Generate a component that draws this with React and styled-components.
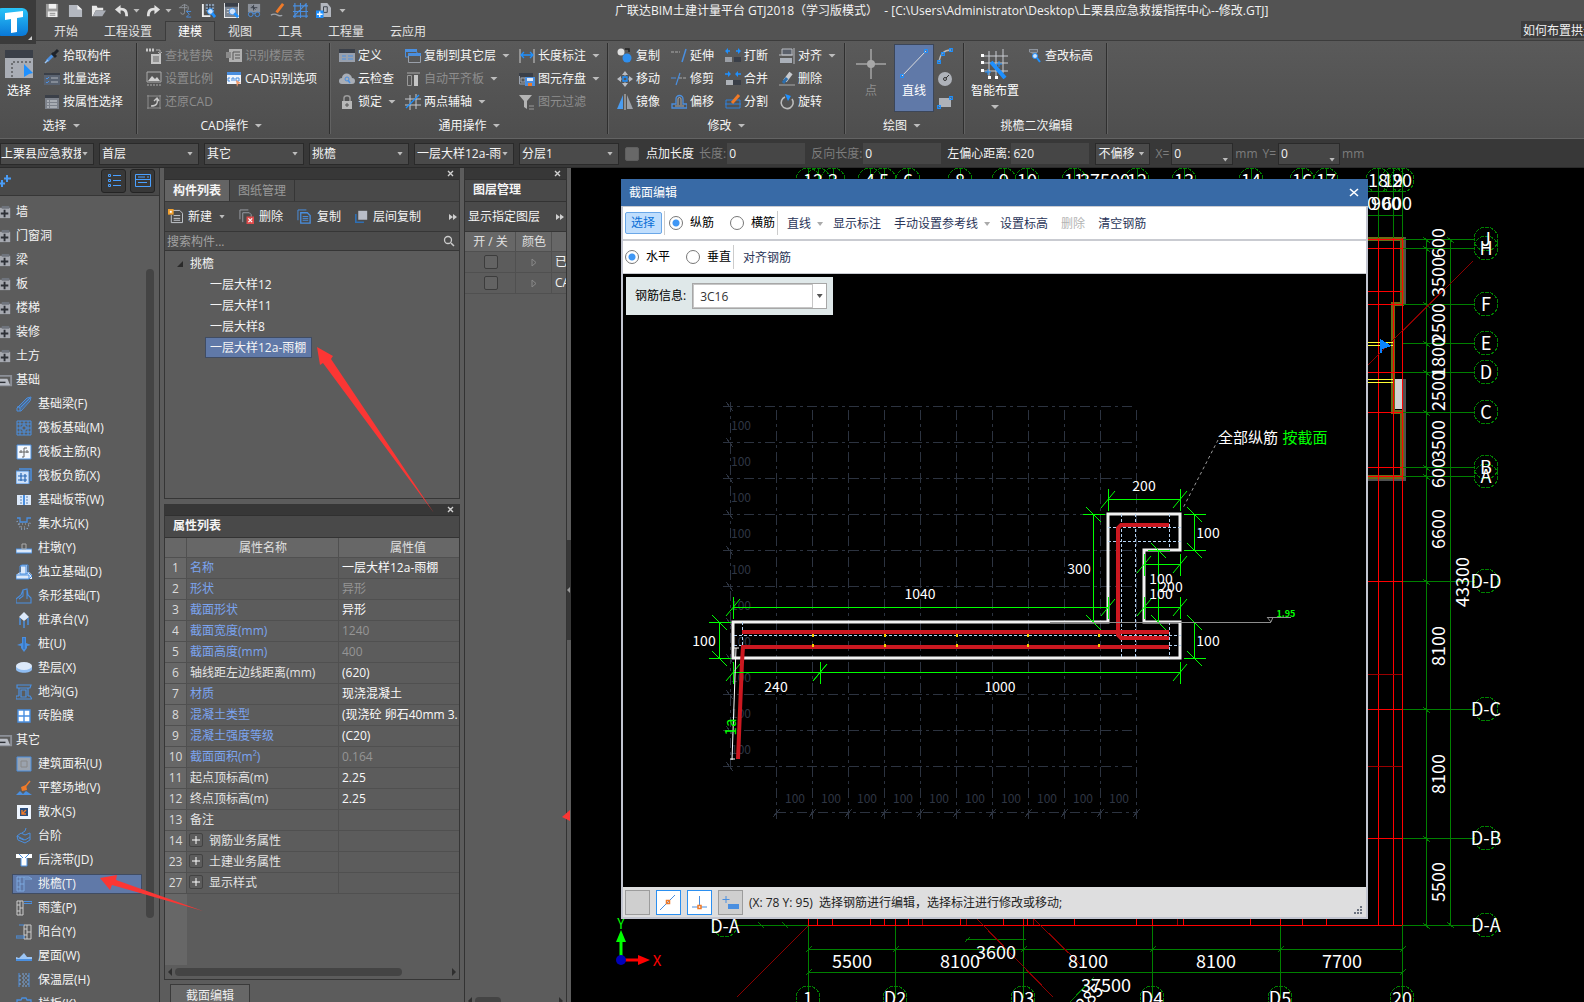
import React from "react";
import styled, { createGlobalStyle, css } from "styled-components";

const Global = createGlobalStyle`
  * { box-sizing: border-box; }
  html, body { margin: 0; background: #000; overflow: hidden; }
  body, button, input, select, table {
    font-family: "Open Sans", "Noto Sans CJK SC", sans-serif;
    font-size: 12px;
    line-height: 16px;
  }
  button, input, select { margin: 0; color: inherit; }
`;

/* ---------- icons ---------- */

const B = "#4a8fe0";
const D = "#3a3f48";
const L = "#dce9fa";
const O = "#f07a28";

const line = (d, stroke = B, w = 1, extra = {}) => (
  <path d={d} fill="none" stroke={stroke} strokeWidth={w} {...extra} />
);
const fill = (d, color = B) => <path d={d} fill={color} />;

const ICONS = {
  save: <>{fill("M1 1h13v14H1z", "#9a9a9a")}{fill("M4 1h8v5H4z", "#f2f2f2")}{fill("M3 9h10v6H3z", "#eee")}{line("M5 11h6M5 13h6", "#888")}</>,
  page: <>{fill("M1 2h9l5 5v8H1z", "#b3b7bf")}{fill("M10 2v5h5z", "#f2f2f2")}</>,
  open: <>{fill("M1 3h5l1 2h6v3H5l-3 6H1z", "#e8e8e8")}{fill("M5 8h11l-4 6H2z", "#a9adb5")}</>,
  undo: fill("M1 7l6-5v3c6 0 8 3 8 9h-3c0-4-1-6-5-6v4z", "#e0e0e0"),
  redo: fill("M15 7L9 2v3c-6 0-8 3-8 9h3c0-4 1-6 5-6v4z", "#e0e0e0"),
  sum: <>{line("M1 5h9M7 1v9a2 2 0 0 1-4 0M3 5c0-4 8-4 8 0s-2 3-2 3", "#8f949c")}{line("M14 9H9l3 3-3 3h5", B)}</>,
  calcview: <>{fill("M1 1h2v14H1zM1 13h9v2H1z", "#eee")}{fill("M5 1h9v8H5z", "#8899ad")}{line("M5 4h9M5 7h9M8 1v8M11 1v8", D)}<circle cx="10" cy="9" r="3" fill="#cfe3fb" stroke="#1e90ff" />{line("M12 11l3 4", "#1e90ff", 3)}</>,
  findview: <>{fill("M0 0h16v16H0z", "#f2f2f2")}{fill("M1 0h14v15H1z", "#7b8490")}{fill("M1 0h14v4H1z", D)}{line("M3 7h4M3 10h2", "#d5d8dc")}<circle cx="9" cy="9" r="3.500" fill="#cfe3fb" stroke={B} />{line("M11 11l4 4", "#1e90ff", 3)}</>,
  glasses: <>{fill("M1 1h13v9H1z", "#8b9099")}{line("M4 5h7M7 2v6M5 3l4 4", D)}<circle cx="4" cy="12" r="2.500" fill="none" stroke={B} /><circle cx="11" cy="12" r="2.500" fill="none" stroke={B} />{line("M6 11h3", B)}</>,
  brush: <>{line("M14 1L7 10", O, 3)}{line("M1 13c6-4 8 3 12 0", "#9ea2a8", 1.5)}</>,
  gridblue: line("M2 0v16M8 0v16M14 0v16M0 3h16M0 9h16M0 14h16M0 15L14 1", B, 1.2),
  addpage: <>{fill("M5 0h7l4 5v10H5z", "#b3b7bf")}{line("M8 4h4v6H8z", D)}{fill("M0 8h8v8H0z", "#1e90ff")}{line("M4 9v6M1 12h6", "#fff", 1.4)}</>,
  dropper: <>{line("M3 13l6-6", B, 3)}{line("M1 15l3-3", "#9cc6f6", 1.5)}{line("M8 5l4 4M10 6l4-4", "#1e2229", 3)}</>,
  batch: <>{fill("M0 2h16v12H0z", "#596270")}{fill("M0 2h16v2H0z", D)}{line("M2 7l1 1 2-2M2 11l1 1 2-2", B)}{line("M7 7h7M7 11h7", "#aeb3bb")}</>,
  props: <>{fill("M1 1h14v14H1z", "#7d828b")}{fill("M1 1h14v3H1z", D)}{line("M3 7h2M6 7h7M3 10h2M6 10h7M3 13h2M6 13h7", "#d5d8dc")}</>,
  replace: <>{line("M0 2h8", "#c8c8c8", 3, { strokeDasharray: "2 1" })}{line("M10 2h4v3M12 4l2 2 2-2", "#b0b0b0")}{fill("M5 6h10v10H5z", "#c4c4c4")}{line("M7 9h6M7 11h6M7 13h6", "#666")}</>,
  floors: <>{fill("M3 1h13v13H3z", "#b0b0b0")}{fill("M0 4h5v6H0z", "#8a8a8a")}{line("M7 4h7M9 7h5M9 10h5M7 4v8", "#555")}</>,
  ratio: <>{line("M1 1h14v10H1z", "#aaa")}{fill("M2 10l4-5 3 3 2-2 3 4z", "#d0d0d0")}{line("M1 14h14", "#aaa", 1, { strokeDasharray: "2 1" })}</>,
  cadopt: <>{fill("M1 1h14v12H1z", "#f0f5fc")}{fill("M1 1h14v3H1z", B)}{line("M4 7H2v3h2M6 10V7h2v3M10 7v3h3V7z", B)}{fill("M10 9l5 3-3 1-1 3z", "#f29a6a")}</>,
  restore: <>{line("M1 2h14M2 1v14M14 1v14M1 14h14", "#8d8d8d")}{line("M5 12c6 0 7-3 6-7M8 7l3-3 2 3", "#c8c8c8", 1.4)}</>,
  define: <>{fill("M0 1h16v13H0z", "#98a0ad")}{fill("M0 1h16v4H0z", D)}{line("M3 8h4M9 8h5M3 11h4M9 11h5", B)}</>,
  cloud: <>{fill("M3 13a3 3 0 0 1 0-6c0-6 9-6 10 0a3 3 0 0 1 0 6z", "#a9aeb6")}<circle cx="8" cy="8" r="2" fill="none" stroke={B} />{line("M9 9l2 3", B, 1.5)}</>,
  lock: <>{line("M5 7V4c0-3 6-3 6 0v3", "#9b9b9b", 1.5)}{fill("M3 7h10v8H3z", "#b8b8b8")}{line("M8 9v4M6 11h4", "#555")}</>,
  copylayer: <>{fill("M0 1h12v3H0z", B)}{line("M.5 1v8H3M12 4v1", B)}{line("M3.500 6.500h12v8h-12z", "#9aa0aa")}{fill("M3 5h13v3H3z", B)}</>,
  align1: <>{line("M2 2h13", "#aaa")}{line("M2.500 4.500h4v10h-4z", "#999")}{fill("M9 4h4v11H9z", "#c5c5c5")}</>,
  axes: <>{line("M0 5h16M0 11h16M5 1v15M11 0v15", "#c5c9cf")}{line("M1 14L14 1", "#1e90ff", 1.2)}</>,
  length: <>{line("M1 1v14M15 1v14", "#ccc")}{line("M2 7h12M5 4L2 7l3 3M11 4l3 3-3 3", "#1e90ff", 1.3)}</>,
  store: <>{fill("M0 2h14v4H0z", D)}{line("M.5 5v8H7M2 7h4v4H2z", "#9aa3b0")}{fill("M6 6h10v9H6z", B)}{fill("M8 7h6v3H8z", "#dfe9f8")}{fill("M9 12h4v3H9z", O)}</>,
  filter: <>{fill("M0 1h13L8 7v8l-3-2V7z", "#b4b4b4")}{line("M10 12h5M10 15h5", "#999")}</>,
  copyball: <><circle cx="4" cy="4" r="3.500" fill="#e0e0e0" /><circle cx="10" cy="10" r="4.500" fill="#2f8fee" />{line("M8 1h4v3", "#222", 1.5)}</>,
  move: <>{line("M8 1v14M1 8h14", "#aaa", 1, { strokeDasharray: "4 6" })}{fill("M8 0l3 4H5zM8 16l3-4H5zM0 8l4-3v6zM16 8l-4-3v6z", "#b9bcc2")}{line("M6 6h4v4H6z", "#1e90ff", 1.3)}</>,
  mirror: <>{fill("M6 1v14H0z", "#4a9cf0")}{fill("M10 1v14h6z", "#9ca1a9")}{line("M8 0v16", "#ccc")}</>,
  extend: <>{line("M0 4h9", "#aaa", 1, { strokeDasharray: "3 1" })}{line("M15 1l-4 13", B, 1.5)}</>,
  trim: <>{line("M0 7h5", B)}{line("M9 2L5 14", B, 1.2)}{line("M8 7h8", "#aaa", 1, { strokeDasharray: "3 1" })}</>,
  offset: <>{line("M1 14v-4h4V5a3 3 0 0 1 7 0v5h4v4z", B, 1.3)}{line("M4 12h9M7 11V5a1 1 0 0 1 3 0v6", "#aaa")}</>,
  break: <>{fill("M0 9h7v5H0z", "#9b9fa6")}{fill("M9 9h7v5H9z", D)}{line("M1 3h4M11 3h4", "#1e90ff", 1.3)}{fill("M3 0l-3 3 3 3zM13 0l3 3-3 3z", "#1e90ff")}</>,
  merge: <>{fill("M1 9h7v5H1z", "#aeb2b8")}{fill("M8 9h8v5H8z", D)}{line("M0 3h4M12 3h4", "#1e90ff", 1.3)}{fill("M3 0l3 3-3 3zM13 0l-3 3 3 3z", "#1e90ff")}</>,
  split: <>{line("M1 6h14v8H1zM0 10h16", "#2f80da")}{line("M14 1L7 9", O, 3)}</>,
  alignr: <>{fill("M3 1h10v6H3z", "#5a606b")}{fill("M1 10h12v5H1z", "#aab0b9")}{line("M3 1h10v6H3zM15 0v16M0 7h14", "#b9bcc2")}</>,
  erase: <>{line("M6 10l6-8", "#c8cbd0", 4)}{line("M4 12l4-5", "#2c6fae", 3)}{line("M0 14h16", "#aaa")}</>,
  rotate: <>{line("M6 3a6 6 0 1 0 7 2", "#bbb", 1.6)}{fill("M6 0l6 2-3 5z", "#1e90ff")}</>,
  arc: <>{line("M2 14C3 6 7 2 14 2", "#bbb", 1.3)}{line("M.700 12.700h2.600v2.600H.700zM4.700 4.700h2.600v2.600H4.700zM12.700.700h2.600v2.600h-2.600z", "#1e90ff", 1.2)}</>,
  circ: <><circle cx="8" cy="8" r="7" fill="#aeb2b9" /><circle cx="8" cy="8" r="1.500" fill="none" stroke="#333" />{line("M9 7l3-3", "#333")}</>,
  rect: <>{fill("M2 4h12v9H2z", "#aeb2b9")}{line("M.700 11.700h2.600v2.600H.700zM12.700 2.700h2.600v2.600h-2.600z", "#1e90ff", 1.2)}</>,
  elev: <>{fill("M3 1h9v3l-2 2v4L7 9V6L3 4z", "#8e949d")}{line("M4 3h7", "#444")}<circle cx="9" cy="8" r="2.500" fill="#cfe3fb" stroke="#1e90ff" />{line("M11 10l3 4", "#1e90ff", 2)}</>,
  newdoc: <>{line("M4.500 1.500h8l3 3v10h-12v-8", "#c8ccd2")}{line("M6 7h7M6 10h7M6 12h7", "#c8ccd2")}{fill("M0 0h6v6H0z", "#f0a030")}{fill("M2 2h2v2H2z", "#fff")}</>,
  deldoc: <>{line("M1 11V1h9M4 14V4h7l2 2v3", "#9b9fa6")}{fill("M8 8h8v8H8z", "#dd4b4b")}{line("M10 10l4 4M14 10l-4 4", "#fff", 1.3)}</>,
  copydoc: <>{line("M1 12V1h9", B)}{line("M4 4h7l3 3v8H4z", B, 1.4)}{line("M6 8h6M6 10h6M6 12h6", B)}</>,
  layers: <>{line("M1 5v10h10", "#2e6fb4", 2)}{fill("M4 1h11v11H4z", "#b9bdc8")}</>,
  closed: <>{fill("M0 3h13v11H0z", "#a6a9b0")}{fill("M4 1h8v3H4z", "#6f747d")}{line("M3 9h8M7 5v8", "#2d3036", 2)}</>,
  opened: <>{line("M0 3h14v10H0z", "#8c9098", 2)}{fill("M0 6h10l3 7H0z", "#b8bcc4")}{line("M2 10h6", "#2d3036", 1.5)}</>,
  beam: <>{fill("M2 12L12 2h2l-1 3L5 14z", "#4b6f9c")}{line("M1 12L11 2l4-1-1 4L5 15H1zM4 15v-4H1M5 11l9-9", B)}</>,
  raft: line("M1 1h14v14H1zM4 1v14M12 1v14M1 4h14M1 12h14M6 6h4v4H6zM8 1v5M8 10v5M1 8h5M10 8h5", B, 1),
  raftmain: <>{fill("M1 1h14v14H1z", "#f5f9ff")}{line("M1 1h14v14H1z", B)}{line("M3 8h10M8 4v9M5 6v3M11 6v3M6 13h2M8 4h3", "#666")}</>,
  raftneg: <>{line("M3 1h12v12", B, 1.5)}{fill("M0 3h13v13H0z", "#cfe2fa")}{line("M0 3h13v13H0z", B)}{line("M2 8h9M2 12h9M5 5v8M9 6v8", "#2767b4", 1.2)}</>,
  strip: <>{fill("M1 3h14v10H1z", L)}{line("M5 4v9M11 4v9", "#5a80b0", 1, { strokeDasharray: "2 1" })}{line("M8 3v10", B, 2)}</>,
  sump: <>{line("M1 2h3v4h7V2h4", B, 1.3)}{line("M1 5l4 8h6l4-8", "#8ba7cc", 1.4, { strokeDasharray: "1 2" })}{line("M3 8h10M5 11h6", "#aaa", 1, { strokeDasharray: "1 2" })}</>,
  pier: <>{fill("M0 9h16v4H0z", L)}{line("M0 9h16v4H0z", B)}{line("M6 4h4v5H6z", "#aaa")}</>,
  pad: <>{fill("M0 11l4-3h9l3 3v4H0z", L)}{fill("M5 1h6v9H5z", L)}{line("M0 11h13v4H0zM4 2h6v8H4zM4 2l2-1h6v8l-2 1M13 15l3-3-3-3", B)}</>,
  stripf: line("M0 15v-4l5-4 2-5 4-1 1 6 3 3v5zM7 2v6l-4 3M11 1v10", B, 1.1),
  pilecap: <>{fill("M8 0l5 5-5 4-5-4z", L)}{line("M4 6v7M8 9v7M12 6v7", B, 1.5)}</>,
  pile: <>{fill("M6 1h4v6l5 2-4 1v2l-3 4-3-4v-2L1 9l5-2z", B)}{line("M8 2v11", "#2767b4")}</>,
  cushion: <>{fill("M0 6v3c0 5 16 5 16 0V6z", "#8fbdf2")}<ellipse cx="8" cy="6" rx="8" ry="4" fill={L} /></>,
  trench: line("M1 1h14l-1 3H1zM3 4v8M12 4v8M3 12H0v3h16l-2-3h-2M5 6h5v7H5z", B, 1.2),
  brick: <>{fill("M2 2h12v12H2z", "#fff")}{line("M2 8h12M8 2v12M2 2h12v12H2z", B, 1.4)}</>,
  area: <>{fill("M1 1h14v14H1z", "#9ba3ae")}{line("M1 1h14v14H1z", B)}{line("M5 5h6v6H5z", "#888")}</>,
  ground: <>{line("M14 1L9 7", O, 1.5)}{fill("M5 7l5-2 1 5-5 1z", O)}{fill("M0 15l4-4 3 3 3-3 6 4z", B)}</>,
  apron: <>{fill("M1 1h14v14H1z", "#eef5ff")}{fill("M4 4h8v8H4z", "#2c4e7d")}{line("M10 6l-4 4M6 6v4h4", O, 1.4)}</>,
  steps: line("M1 8l4-3 4 2 5-2v7l-5 3-7-3zM1 8l8 4 5-3M3 10l5 2M6 5l3-2 1-3", B),
  postcast: <>{fill("M0 2h16v4h-5v8H5V6H0z", "#fff")}{line("M5 6v8h6V6M3 2l4 4M9 6l4-4", B)}</>,
  eave: line("M1 1h7v14H1zM4 1v14M1 5h3M4 8h4M1 11h3M8 1h5l3 2H9", "#7ca9df"),
  canopy: <>{line("M1 1h6v14H1zM4 1v14M1 5h3M4 8h3M1 11h3", "#ccc")}{line("M8 1.500h8v2H8", B)}</>,
  balcony: <>{line("M8 1h7v14H8zM11 1v14M8 5h3M11 8h4M8 11h3", "#ccc")}{line("M3 1h5M0 12h8v2H0z", B)}</>,
  roof: <>{fill("M0 12v-3l3 1 5-5 3 4 5 0v3z", "#9cc5f5")}{fill("M0 11h16v2H0z", B)}</>,
  insul: <>{line("M3 1v14M13 1v14", B)}{line("M7 1v14M10 1v14M3 4h10M3 8h10M3 12h10", "#7ca9df", 1, { strokeDasharray: "2 2" })}</>,
  rail: line("M1 4h4l1-2h4l1 2h4v8H1zM1 8h14", B, 1.3),
};

const Svg = styled.svg`
  display: block;
  flex: none;
`;
const Icon = ({ name, size = 16 }) => (
  <Svg width={size} height={size} viewBox="0 0 16 16" aria-hidden="true">
    {ICONS[name]}
  </Svg>
);

/* ---------- shared parts ---------- */

const Caret = styled.i`
  flex: none;
  width: 8px;
  height: 4px;
  margin-left: 6px;
  background: ${(p) => p.$color || "#bdbdbd"};
  clip-path: polygon(0 0, 100% 0, 50% 100%);
`;

const PlainButton = styled.button`
  display: flex;
  align-items: center;
  padding: 0;
  border: 0;
  background: none;
  white-space: nowrap;
  text-align: left;
`;

/* ---------- frame ---------- */

const Shell = styled.div`
  position: relative;
  display: flex;
  flex-direction: column;
  height: 100vh;
  overflow: hidden;
  color: #f4f4f4;
  background: #5c5c5c;
`;

const Top = styled.header`
  display: flex;
  flex: none;
  height: 41px;
  background: #535353;
  border-bottom: 1px solid #3c3c3c;
`;

const LogoBox = styled.div`
  flex: none;
  width: 36px;
  height: 44px;
  z-index: 1;
  background: #3b3b3b;
`;

const TopMain = styled.div`
  display: flex;
  flex: 1;
  flex-direction: column;
  min-width: 0;
`;

const TitleRow = styled.div`
  display: flex;
  align-items: center;
  height: 22px;
`;

const Quick = styled.div`
  display: flex;
  align-items: center;
  gap: 8px;
  width: 579px;
  padding-left: 9px;
`;

const QuickCaret = styled(Caret)`
  width: 7px;
  margin-left: ${(p) => (p.$end ? 0 : "-4px")};
  margin-right: -2px;
`;

const Title = styled.h1`
  margin: 0;
  font-size: 12px;
  font-weight: 400;
  white-space: pre;
`;

const MenuRow = styled.nav`
  display: flex;
  align-items: stretch;
  height: 19px;
  padding-left: 5px;
`;

const MenuTab = styled(PlainButton)`
  padding: 1px 12px 0;
  border: 1px solid transparent;
  border-bottom: 0;
  color: #e2e2e2;
  ${(p) =>
    p.$active &&
    css`
      height: 20px;
      color: #fff;
      background: #5a5a5a;
      border-color: #3c3c3c;
    `}
`;

const HelpBox = styled.input`
  width: 63px;
  height: 17px;
  margin-left: auto;
  padding: 0 0 0 2px;
  border: 0;
  background: #3d3d3d;
  color: #f0f0f0;
`;

/* ---------- ribbon ---------- */

const Ribbon = styled.section`
  display: flex;
  flex: none;
  height: 98px;
  background: linear-gradient(#5a5a5a, #4e4e4e);
  border-bottom: 1px solid #636363;
`;

const Group = styled.div`
  display: flex;
  flex: none;
  flex-direction: column;
  margin: 2px 0 4px;
  padding: 1px ${(p) => p.$right}px 0 ${(p) => p.$left}px;
  border-right: 1px solid #2f2f2f;
  box-shadow: 1px 0 0 #626262;
`;

const GroupBody = styled.div`
  display: flex;
  gap: ${(p) => p.$gap}px;
  height: 69px;
`;

const Caption = styled.div`
  display: flex;
  flex: 1;
  align-items: center;
  justify-content: center;
  padding-top: 4px;
  padding-left: ${(p) => p.$shift || 0}px;
`;

const Column = styled.div`
  display: flex;
  flex-direction: column;
`;

const Tool = styled(PlainButton)`
  gap: 3px;
  height: 23px;
  color: ${(p) => (p.disabled ? "#8e8e8e" : "#f6f6f6")};
  ${Caret} {
    margin-left: 3px;
  }
`;

const BigTool = styled(PlainButton)`
  flex-direction: column;
  gap: 4px;
  width: ${(p) => p.$w}px;
  height: 68px;
  padding-top: 4px;
  color: ${(p) => (p.disabled ? "#8e8e8e" : "#fff")};
  border: 1px solid ${(p) => (p.$on ? "#3c4658" : "transparent")};
  background: ${(p) => (p.$on ? "#6079a8" : "none")};
  ${Caret} {
    margin: 2px 0 0;
  }
`;

const T = ({ icon, children, caret, off }) => (
  <Tool disabled={off}>
    <Icon name={icon} />
    {children}
    {caret && <Caret />}
  </Tool>
);

/* ---------- option bar ---------- */

const Options = styled.section`
  display: flex;
  flex: none;
  align-items: center;
  height: 29px;
  padding-top: 1px;
  background: #383838;
  border-bottom: 1px solid #2a2a2a;
  white-space: nowrap;
`;

const Pick = styled.span`
  display: flex;
  flex: none;
  align-items: center;
  width: ${(p) => p.$w}px;
  height: 22px;
  margin-right: 5px;
  padding-right: 5px;
  border: 1px solid #2a2a2a;
  background: #4a4a4a;
  select {
    flex: 1;
    min-width: 0;
    height: 20px;
    padding: 0 0 0 ${(p) => (p.$flush ? 0 : 2)}px;
    border: 0;
    appearance: none;
    background: none;
    outline: 0;
  }
  ${Caret} {
    width: 6px;
    margin-left: 1px;
  }
`;

const Picker = ({ label, value, w, flush }) => (
  <Pick $w={w} $flush={flush}>
    <select aria-label={label} defaultValue={value}>
      <option>{value}</option>
    </select>
    <Caret />
  </Pick>
);

const Field = styled.label`
  display: flex;
  flex: none;
  align-items: center;
  gap: 1px;
  margin-right: 6px;
  color: ${(p) => (p.$on ? "#f4f4f4" : "#7d7d7d")};
  input {
    width: ${(p) => p.$w}px;
    height: 21px;
    padding: 0 2px;
    border: 0;
    background: #464646;
    color: #f4f4f4;
  }
`;

const Check = styled.input`
  appearance: none;
  flex: none;
  width: 14px;
  height: 14px;
  margin: 0;
  border: 1px solid ${(p) => p.$line || "#5f5f5f"};
  border-radius: 2px;
  background: ${(p) => p.$bg || "#686868"};
`;

const CheckLabel = styled.label`
  display: flex;
  align-items: center;
  gap: 7px;
  margin: 0 5px 0 1px;
`;

const PairBox = styled.label`
  display: flex;
  flex: none;
  align-items: center;
  margin-right: 5px;
  color: #7d7d7d;
`;

const PairInput = styled.span`
  display: flex;
  align-items: flex-end;
  width: 62px;
  height: 22px;
  margin: 0 2px;
  padding: 0 4px 2px 0;
  border: 1px solid #2a2a2a;
  background: #464646;
  input {
    width: 45px;
    height: 17px;
    padding: 0 2px;
    border: 0;
    background: none;
    color: #f4f4f4;
  }
  ${Caret} {
    width: 6px;
    margin-left: auto;
  }
`;

const Pair = ({ label }) => (
  <PairBox>
    {label}
    <PairInput><input defaultValue="0" /><Caret /></PairInput>
    mm
  </PairBox>
);

/* ---------- workspace ---------- */

const Workspace = styled.main`
  display: flex;
  flex: 1;
  min-height: 0;
`;

const Side = styled.aside`
  display: flex;
  flex: none;
  flex-direction: column;
  width: 160px;
  border-right: 1px solid #333;
  overflow: hidden;
`;

const SideBar = styled.div`
  display: flex;
  flex: none;
  align-items: center;
  gap: 4px;
  height: 28px;
  padding: 0 4px 2px 0;
  background: #494949;
  border-bottom: 1px solid #363636;
  > :first-child {
    margin-right: auto;
  }
`;

const SideToggle = styled(PlainButton)`
  justify-content: center;
  width: 25px;
  height: 24px;
  border: 1px solid #242424;
  border-radius: 3px;
  background: #383838;
`;

const SideBody = styled.div`
  display: flex;
  flex: 1;
  min-height: 0;
`;

const SideList = styled.ul`
  flex: 1;
  margin: 0;
  padding: 4px 0 0;
  list-style: none;
  li {
    display: flex;
    flex-direction: column;
  }
`;

const SideGroup = styled(PlainButton)`
  gap: 3px;
  height: 24px;
  svg { margin-left: -2px; }
`;

const SideItem = styled(PlainButton)`
  gap: 6px;
  width: 130px;
  height: 20px;
  margin: 2px 0 2px 12px;
  padding-left: 3px;
  border: 1px solid ${(p) => (p.$on ? "#404c62" : "transparent")};
  background: ${(p) => (p.$on ? "#6079a8" : "none")};
`;

const SideTrack = styled.div`
  flex: none;
  width: 13px;
  padding-top: 73px;
  &::before {
    content: "";
    display: block;
    width: 8px;
    height: 649px;
    border-radius: 4px;
    background: #444;
  }
`;

const Dock = styled.div`
  display: flex;
  flex: none;
  flex-direction: column;
  gap: 5px;
  width: 305px;
  padding: 0 4px;
  border-right: 1px solid #333;
  overflow: hidden;
`;

const Panel = styled.section`
  display: flex;
  flex: ${(p) => p.$flex || "none"};
  flex-direction: column;
  min-height: 0;
  height: ${(p) => (p.$h ? p.$h + "px" : "auto")};
  border: 1px solid #363636;
  border-top: 0;
`;

const Strip = styled.div`
  display: flex;
  flex: none;
  align-items: center;
  justify-content: flex-end;
  height: 12px;
  padding-right: 5px;
  background: #373737;
  border-bottom: 1px solid #303030;
`;

const PanelTabs = styled.div`
  display: flex;
  flex: none;
  height: 22px;
  background: #494949;
  border-bottom: 1px solid #3a3a3a;
`;

const PanelTab = styled(PlainButton)`
  padding: 0 8px;
  color: ${(p) => (p.$on ? "#f6f6f6" : "#999")};
  font-weight: ${(p) => (p.$on ? 600 : 400)};
  background: ${(p) => (p.$on ? "#646464" : "none")};
  border-right: 1px solid #363636;
`;

const PanelTitle = styled.h2`
  flex: none;
  height: 22px;
  margin: 0;
  padding: 2px 8px;
  font-size: 12px;
  line-height: 16px;
  font-weight: 600;
  background: #494949;
  border-bottom: 1px solid #333;
  white-space: nowrap;
`;

const PanelTools = styled.div`
  display: flex;
  flex: none;
  align-items: center;
  gap: 14px;
  height: 30px;
  padding: 0 2px 0 3px;
  background: #4a4a4a;
  border-bottom: 1px solid #363636;
  > :last-child { margin-left: auto; }
`;

const PanelTool = styled(PlainButton)`
  gap: 5px;
  ${Caret} {
    width: 6px;
    margin-left: 2px;
  }
`;

const SearchRow = styled.label`
  display: flex;
  flex: none;
  align-items: center;
  height: 19px;
  padding: 0 4px 0 2px;
  background: #4c4c4c;
  border-bottom: 1px solid #363636;
  input {
    flex: 1;
    min-width: 0;
    height: 18px;
    padding: 0;
    border: 0;
    background: none;
    &::placeholder { color: #a2a2a2; }
  }
`;

const Tree = styled.ul`
  margin: 0;
  padding: ${(p) => (p.$root ? "2px 0 0 6px" : "0 0 0 34px")};
  list-style: none;
`;

const TreeItem = styled(PlainButton)`
  gap: 4px;
  height: 21px;
  padding: 0 5px 0 4px;
  border: 1px solid ${(p) => (p.$on ? "#404c62" : "transparent")};
  background: ${(p) => (p.$on ? "#6079a8" : "none")};
`;

const Grid = styled.table`
  width: 100%;
  table-layout: fixed;
  border-collapse: separate;
  border-spacing: 0;
  th, td {
    height: 21px;
    padding: 0 2px 0 3px;
    border-right: 1px solid #505050;
    border-bottom: 1px solid #505050;
    font-weight: 400;
    text-align: left;
    white-space: nowrap;
    overflow: hidden;
  }
  thead th {
    height: 20px;
    background: #676767;
    color: #e0e0e0;
    text-align: center;
  }
  tr > :last-child { border-right: 0; }
`;

const NumCell = styled.th`
  &&& {
    background: #676767;
    color: #dcdcdc;
    text-align: center;
    padding: 0;
  }
`;

const ValueHead = styled.th`
  &&& { padding-left: 20px; }
`;

const NameCell = styled.td`
  color: ${(p) => (p.$blue ? "#7ba4f0" : "#e4e4e4")};
`;

const ValueCell = styled.td`
  color: ${(p) => (p.$dim ? "#959595" : "#fafafa")};
`;

const LayerCell = styled.td`
  > * { display: block; margin: 0 auto; }
`;

const Expand = styled.button`
  width: 14px;
  height: 14px;
  margin: 0 6px 2px -1px;
  padding: 0;
  border: 1px solid #434343;
  border-radius: 2px;
  background: none;
  vertical-align: middle;
  svg { margin: 0 auto; }
`;

const TableFill = styled.div`
  flex: 1;
  min-height: 0;
  background: linear-gradient(90deg, #676767 22px, transparent 22px);
`;

const ScrollRow = styled.div`
  display: flex;
  flex: none;
  align-items: center;
  height: 14px;
  margin-bottom: ${(p) => (p.$low ? "-6px" : 0)};
  padding: 0 3px;
  gap: 3px;
  &::before, &::after {
    content: "";
    width: 4px;
    height: 8px;
    background: #2f2f2f;
    clip-path: polygon(100% 0, 100% 100%, 0 50%);
  }
  &::after {
    margin-left: auto;
    clip-path: polygon(0 0, 0 100%, 100% 50%);
  }
  span {
    width: ${(p) => p.$thumb}px;
    height: 8px;
    border-radius: 4px;
    background: #444;
  }
`;

const BottomTab = styled.button`
  flex: none;
  width: 80px;
  height: 24px;
  margin: -1px 0 -6px 6px;
  padding: 0;
  border: 1px solid #3a3a3a;
  background: #676767;
  color: #eee;
`;

const LayerDock = styled.div`
  display: flex;
  flex: none;
  width: 106px;
  overflow: hidden;
`;

const LayerPanel = styled.section`
  display: flex;
  flex-direction: column;
  width: 102px;
  border-right: 1px solid #333;
  overflow: hidden;
`;

const LayerFill = styled.div`
  flex: 1;
`;

const Splitter = styled.div`
  display: flex;
  flex: 1;
  flex-direction: column;
  &::before { content: ""; height: 372px; }
`;

const SplitHandle = styled.button`
  display: flex;
  align-items: center;
  height: 100px;
  padding: 0;
  border: 0;
  background: #373737;
  &::before {
    content: "";
    width: 3px;
    height: 6px;
    background: #999;
    clip-path: polygon(100% 0, 100% 100%, 0 50%);
  }
`;

/* ---------- drawing area ---------- */

const Stage = styled.section`
  position: relative;
  flex: 1;
  min-width: 0;
  overflow: hidden;
  background: #000;
`;

const Drawing = styled.svg`
  display: block;
  width: 100%;
  height: 100%;
  font-family: "Noto Sans CJK SC", sans-serif;
`;

const Mark = styled.text.attrs({ dy: -1 })`
  fill: ${(p) => p.$c || "#fff"};
  text-anchor: middle;
  dominant-baseline: central;
`;

const Dialog = styled.section`
  position: absolute;
  left: 50px;
  top: 11px;
  display: flex;
  flex-direction: column;
  width: 747px;
  height: 740px;
  border: 2px solid #c2c5d0;
  border-top: 0;
  color: #10182c;
  background: #000;
`;

const DialogHead = styled.header`
  display: flex;
  flex: none;
  align-items: center;
  justify-content: space-between;
  height: 27px;
  margin: 0 -2px;
  padding: 0 9px 0 8px;
  color: #fff;
  background: #386aa6;
`;

const DialogTitle = styled.h2`
  margin: 0;
  font-size: 12px;
  font-weight: 400;
`;

const DialogBar = styled.div`
  display: flex;
  flex: none;
  align-items: center;
  height: 34px;
  padding: 0 2px;
  background: #fff;
  border-top: 1px solid #c9cbd1;
  border-bottom: 1px solid #c9cbd1;
`;

const DialogTool = styled(PlainButton)`
  margin-right: 13px;
  padding-top: 2px;
  color: ${(p) => (p.disabled ? "#b4b4b4" : "#2a3558")};
  ${Caret} {
    width: 6px;
    margin-right: -3px;
  }
`;

const DialogOn = styled(PlainButton)`
  height: 22px;
  padding: 0 6px 0 5px;
  border: 1px solid #6aa7e8;
  border-radius: 2px;
  background: #c0defd;
  color: #0a6fd6;
`;

const Sep = styled.i`
  flex: none;
  width: 1px;
  height: 24px;
  margin: 0 ${(p) => p.$right}px 0 2px;
  background: #ccc;
`;

const RadioLabel = styled.label`
  display: flex;
  align-items: center;
  gap: 7px;
  margin-right: ${(p) => (p.$last ? 0 : 16)}px;
  color: #000;
  input {
    appearance: none;
    width: 14px;
    height: 14px;
    border: 1px solid #777;
    border-radius: 50%;
    background: #fff;
  }
  input:checked {
    background: radial-gradient(circle, #3f97f5 3px, #fff 4px);
  }
`;

const DialogCanvas = styled.div`
  position: relative;
  flex: 1;
  min-height: 0;
  overflow: hidden;
`;

const InfoBox = styled.div`
  position: absolute;
  left: 3px;
  top: 3px;
  display: flex;
  align-items: center;
  gap: 6px;
  height: 38px;
  padding: 0 6px 0 9px;
  background: #dfe8e9;
  color: #000;
`;

const Combo = styled.span`
  display: flex;
  width: 135px;
  height: 26px;
  border: 1px solid #a7a7a7;
  background: #fff;
  input {
    flex: 1;
    min-width: 0;
    padding: 2px 6px 0;
    border: 1px solid #c6c6c6;
    background: #fff;
    color: #333;
    outline: 0;
  }
  button {
    display: flex;
    align-items: center;
    justify-content: center;
    width: 13px;
    padding: 0;
    border: 0;
    background: #fff;
  }
  ${Caret} {
    width: 6px;
    margin: 0;
  }
`;

const Status = styled.footer`
  display: flex;
  flex: none;
  align-items: center;
  gap: 6px;
  height: 30px;
  padding: 0 4px 0 2px;
  background: #dededf;
  color: #222;
  svg:last-child { align-self: flex-end; }
`;

const StatusText = styled.span`
  flex: 1;
  padding-top: 2px;
  white-space: pre;
`;

const Grip = styled(Svg)`
  margin-bottom: 3px;
`;

const Snap = styled.button`
  width: 25px;
  height: 25px;
  padding: 0;
  border: 1px solid ${(p) => (p.$on ? "#2b8ff0" : "#9c9c9c")};
  background: ${(p) => (p.$on ? "#fff" : "#cfcfcf")};
`;

const Overlay = styled.svg`
  position: absolute;
  inset: 0;
  width: 100%;
  height: 100%;
  pointer-events: none;
`;

/* ---------- plan drawing data ---------- */

const TOP_AXES = [
  [808, "1"], [818, "2"], [833, "3"], [870, "4"], [884, "5"], [908, "6"], [960, "8"],
  [1004, "9"], [1027, "10"], [1074, "11"], [1137, "12"], [1184, "13"], [1251, "14"],
  [1302, "16"], [1326, "17"], [1378, "18"], [1393, "19"], [1402, "20"],
];
const RIGHT_AXES = [
  [239, "J"], [248, "H"], [304, "F"], [343, "E"], [372, "D"], [412, "C"], [467, "B"],
  [476, "A"], [581, "D-D"], [709, "D-C"], [838, "D-B"], [925, "D-A"],
];
const BOTTOM_AXES = [[808, "1"], [895, "D2"], [1023, "D3"], [1152, "D4"], [1280, "D5"], [1402, "20"]];
const RIGHT_DIMS = [
  [243, "600"], [277, "3500"], [323, "2500"], [357, "1800"], [391, "2500"], [440, "3500"],
  [473, "600"], [529, "6600"], [646, "8100"], [774, "8100"], [882, "5500"],
];
const RED_STUBS = [808, 817, 832, 870, 884, 895, 908, 960, 1003, 1023, 1027, 1074, 1136, 1152, 1183, 1250, 1280, 1302, 1326];
const RED_ROWS = [239, 248, 291, 304, 372, 412, 467, 476, 581, 709, 838];

function Plan() {
  return (
    <Drawing fontSize="18" aria-label="plan">
      <g transform="translate(-571 -168)" shapeRendering="crispEdges">
        <path d="M1368 239H1404V304M1404 412V479H1368M1404 379V412" fill="none" stroke="#4f4f4f" strokeWidth="4" />
        <path d="M1368 239H1402V304H1393V412H1402V477H1368" fill="none" stroke="#6b6b14" strokeWidth="4" />
        <path d="M1395 379h8v30h-8z" fill="#d0d0d0" />
        <g stroke="#008000" fill="none">
          {TOP_AXES.map(([x, t]) => <path key={t} d={`M${x}.5 168V238`} />)}
          {RIGHT_AXES.map(([y, t]) => <path key={t} d={`M1402 ${y}.5H1474`} />)}
          <path d="M1426.500 239V925M1450.500 239V925M1368 191.500H1402M1368 215.500H1402" />
          {RIGHT_AXES.map(([y, t]) => <path key={t} d={`M1423 ${y - 2}l7 6`} />)}
          <path d="M1447 237l7 6M1447 922l7 6" />
          {BOTTOM_AXES.map(([x, t]) => <path key={t} d={`M${x}.5 925V998M${x - 2} 952l6-6`} />)}
          <path d="M806 975l6-6M1400 975l6-6" />
          <path d="M808 949.500H1402M808 972.500H1402M737 925.500H808M966 939.500H1026M758 922l6 6M782 922l6 6M965 942l5-5M1070 1002L1094 977" />
        </g>
        <g stroke="#f00" fill="none">
          <path d="M1378.500 238V925M1393.500 238V925M1402.500 238V925M808 925.500H1402" />
          {RED_ROWS.map((y) => <path key={y} d={`M1368 ${y}.5H1402`} />)}
          {RED_STUBS.map((x) => <path key={x} d={`M${x}.5 917V925`} />)}
        </g>
        <path d="M1368 674.500H1402M1368 766.500H1402M922.500 917V925M966.500 917V925M1033.500 917V925M1177.500 917V925" stroke="#900" />
        <path d="M1368 365L1473 261M808 926L737 997M977 919L1053 997M1034 919L1083 967" stroke="#8b0000" />
        <path d="M1368 342.500H1393M1368 345.500H1393M1368 379.500H1393M1368 382.500H1393" stroke="#ff3" />
        <path d="M1380 339l12 7-10 3v4h-2z" fill="#0a84ff" />
        <g fill="none" stroke="#008000" strokeDasharray="4 1">
          {TOP_AXES.map(([x, t]) => <circle key={t} cx={x} cy="180" r="12" />)}
          {RIGHT_AXES.map(([y, t]) => <circle key={t} cx="1486" cy={y} r="12" />)}
          {BOTTOM_AXES.map(([x, t]) => <circle key={t} cx={x} cy="998" r="12" />)}
          <circle cx="725" cy="925" r="12" />
        </g>
        {TOP_AXES.map(([x, t]) => <Mark key={t} x={x} y="180">{t}</Mark>)}
        {RIGHT_AXES.map(([y, t]) => <Mark key={t} x="1486" y={y}>{t}</Mark>)}
        {BOTTOM_AXES.map(([x, t]) => <Mark key={t} x={x} y="998">{t}</Mark>)}
        <Mark x="725" y="926">D-A</Mark>
        <Mark x="1105" y="180">37500</Mark>
        <Mark x="1362" y="203">900</Mark>
        <Mark x="1386" y="203">900</Mark>
        <Mark x="1397" y="203">600</Mark>
        {RIGHT_DIMS.map(([y, t]) => (
          <Mark key={y} transform={`translate(1438 ${y}) rotate(-90)`}>{t}</Mark>
        ))}
        <Mark transform="translate(1462 582) rotate(-90)">43300</Mark>
        <Mark x="852" y="961">5500</Mark>
        <Mark x="960" y="961">8100</Mark>
        <Mark x="996" y="952">3600</Mark>
        <Mark x="1088" y="961">8100</Mark>
        <Mark x="1216" y="961">8100</Mark>
        <Mark x="1342" y="961">7700</Mark>
        <Mark x="1106" y="985">37500</Mark>
        <Mark transform="translate(1089 997) rotate(-45)">285</Mark>
      </g>
      <g transform="translate(-571 -168)">
        <path d="M621 960V938" stroke="#0f0" strokeWidth="3" />
        <path d="M621 930l5 12h-10z" fill="#0f0" />
        <path d="M621 960H640" stroke="#f00" strokeWidth="3" />
        <path d="M650 960l-12-5v10z" fill="#f00" />
        <circle cx="621" cy="960" r="5" fill="#0000b8" />
        <Mark x="621" y="924" fontSize="14" $c="#0f0">Y</Mark>
        <Mark x="657" y="960" fontSize="15" $c="#f00">X</Mark>
      </g>
    </Drawing>
  );
}

/* ---------- section drawing ---------- */

const STEPS = Array.from({ length: 11 }, (_, i) => i);
const H_DIMS = [
  // y, x1, x2, label, label x, label y
  [499, 1108, 1180, "200", 1144, 486],
  [607, 733, 1108, "1040", 920, 594],
  [607, 1144, 1180, "100", 1161, 594],
  [564, 1144, 1180, "100", 1161, 579],
  [672, 733, 820, "240", 776, 687],
  [672, 820, 1180, "1000", 1000, 687],
];
const V_DIMS = [
  // x, y1, y2, label, label x
  [1093, 514, 622, "300", 1079],
  [1194, 514, 550, "100", 1208],
  [1194, 622, 658, "100", 1208],
  [719, 622, 658, "100", 704],
  [1158, 550, 622, "200", 1171],
];

function Section() {
  return (
    <Drawing fontSize="14" aria-label="section">
      <g transform="translate(-623 -274)">
        <g stroke="#2c3340" fill="none" shapeRendering="crispEdges">
          <g strokeDasharray="10 4 3 4">
            {STEPS.map((i) => <path key={i} d={`M723 ${406 + 36 * i}.5H1136`} />)}
            {STEPS.map((i) => <path key={i} d={`M${776 + 36 * i}.5 410V820`} />)}
            <path d="M730.500 402V770M776 812.500H1136" />
          </g>
          {STEPS.map((i) => <path key={i} d={`M726 ${402 + 36 * i}l7 9M${773 + 36 * i} 817l7-8`} />)}
        </g>
        <g fontSize="12">
          {STEPS.slice(0, 10).map((i) => (
            <React.Fragment key={i}>
              <Mark x="741" y={425 + 36 * i} $c="#2f3644">100</Mark>
              <Mark x={795 + 36 * i} y="798" $c="#2f3644">100</Mark>
            </React.Fragment>
          ))}
        </g>
        <path d="M733 622H1108V514H1180V550H1144V622H1180V658H733Z" fill="none" stroke="#f2f2f2" strokeWidth="3" />
        <g stroke="#b4d2f2" strokeDasharray="3 2" fill="none" shapeRendering="crispEdges">
          <path d="M1108 527.500H1181M1108 541.500H1181M734 635.500H1181M734 645.500H1181M1121.500 514V658M1135.500 514V658M1169.500 514V550M1169.500 622V658M742.500 622V650" />
        </g>
        <g stroke="#cc1820" strokeWidth="4" fill="none">
          <path d="M742 632H1169M1169 647H743L742 662L738 759M1169 525H1121L1118 528V635L1121 638H1169" />
        </g>
        <g fill="#f4d000">
          {[812, 884, 956, 1027, 1098].map((x) => <path key={x} d={`M${x} 634h2v3h-2zM${x} 644h2v3h-2z`} />)}
        </g>
        <g stroke="#0f0" fill="none">
          {H_DIMS.map(([y, a, b]) => (
            <path key={`${y}-${a}`} shapeRendering="crispEdges" d={`M${a} ${y}.5H${b}M${a}.5 ${y - 10}v22M${b}.5 ${y - 10}v22`} />
          ))}
          {V_DIMS.map(([x, a, b]) => (
            <path key={`${x}-${a}`} shapeRendering="crispEdges" d={`M${x}.5 ${a}V${b}M${x - 10} ${a}.5h22M${x - 10} ${b}.5h22`} />
          ))}
          {H_DIMS.map(([y, a, b]) => (
            <path key={`t${y}-${a}`} d={`M${a - 7} ${y + 9}l14-17M${b - 7} ${y + 9}l14-17`} />
          ))}
          {V_DIMS.map(([x, a, b]) => (
            <path key={`t${x}-${a}`} d={`M${x - 7} ${a - 7}l15 15M${x - 7} ${b - 7}l15 15`} />
          ))}
        </g>
        {H_DIMS.map(([y, a, b, t, tx, ty]) => (
          <Mark key={`l${y}-${a}`} x={tx} y={ty}>{t}</Mark>
        ))}
        {V_DIMS.map(([x, a, b, t, tx]) => (
          <Mark key={`l${x}-${a}`} x={tx} y={(a + b) / 2 + 1}>{t}</Mark>
        ))}
        <path d="M1050 622.500H1271M1267 617.500H1291M1267 617l4 5 2-5" stroke="#8d8d8d" fill="none" />
        <path d="M1218 440L1183 508" stroke="#999" strokeDasharray="3 3" />
        <path d="M736 648L732 760M734 648h5M730 759h5" stroke="#fff" fill="none" />
        <Mark x="1286" y="614" fontSize="9" fontWeight="700" $c="#0f0">1.95</Mark>
        <Mark x="1248" y="437" fontSize="15">全部纵筋</Mark>
        <Mark x="1305" y="437" fontSize="15" $c="#0f0">按截面</Mark>
        <Mark transform="translate(730 727) rotate(-90)" fontSize="15" $c="#0f0">1a</Mark>
      </g>
    </Drawing>
  );
}

/* ---------- data ---------- */

const MENU = ["开始", "工程设置", "建模", "视图", "工具", "工程量", "云应用"];
const SIDE = [
  ["墙"], ["门窗洞"], ["梁"], ["板"], ["楼梯"], ["装修"], ["土方"],
  ["基础", [
    ["beam", "基础梁(F)"], ["raft", "筏板基础(M)"], ["raftmain", "筏板主筋(R)"], ["raftneg", "筏板负筋(X)"],
    ["strip", "基础板带(W)"], ["sump", "集水坑(K)"], ["pier", "柱墩(Y)"], ["pad", "独立基础(D)"],
    ["stripf", "条形基础(T)"], ["pilecap", "桩承台(V)"], ["pile", "桩(U)"], ["cushion", "垫层(X)"],
    ["trench", "地沟(G)"], ["brick", "砖胎膜"],
  ]],
  ["其它", [
    ["area", "建筑面积(U)"], ["ground", "平整场地(V)"], ["apron", "散水(S)"], ["steps", "台阶"],
    ["postcast", "后浇带(JD)"], ["eave", "挑檐(T)"], ["canopy", "雨蓬(P)"], ["balcony", "阳台(Y)"],
    ["roof", "屋面(W)"], ["insul", "保温层(H)"], ["rail", "栏板(K)"],
  ]],
];
const PARTS = ["一层大样12", "一层大样11", "一层大样8", "一层大样12a-雨棚"];
const PROPS = [
  [1, "名称", "一层大样12a-雨棚", 1], [2, "形状", "异形", 1, 1], [3, "截面形状", "异形", 1],
  [4, "截面宽度(mm)", "1240", 1, 1], [5, "截面高度(mm)", "400", 1, 1],
  [6, "轴线距左边线距离(mm)", "(620)"], [7, "材质", "现浇混凝土", 1],
  [8, "混凝土类型", "(现浇砼 卵石40mm 3.", 1], [9, "混凝土强度等级", "(C20)", 1],
  [10, "截面面积(m²)", "0.164", 1, 1], [11, "起点顶标高(m)", "2.25"], [12, "终点顶标高(m)", "2.25"],
  [13, "备注", ""], [14, "钢筋业务属性", "", 0, 0, 1], [23, "土建业务属性", "", 0, 0, 1],
  [27, "显示样式", "", 0, 0, 1],
];

/* ---------- sections ---------- */

function TopBar() {
  return (
    <Top>
      <LogoBox>
        <Svg width="36" height="44" aria-label="logo">
          <defs>
            <linearGradient id="lg" x1="0" y1="0" x2="0" y2="1">
              <stop offset="0" stopColor="#29c4f8" />
              <stop offset="1" stopColor="#0a78d8" />
            </linearGradient>
          </defs>
          <rect x="-4" y="8" width="32" height="28" rx="6" fill="url(#lg)" />
          <path d="M5 13l18-2v6l-6 1v14l-6 1V19l-6 1z" fill="#fff" />
          <path d="M32 36v4h-4z" fill="#ccc" />
        </Svg>
      </LogoBox>
      <TopMain>
        <TitleRow>
          <Quick>
            {["save", "page", "open", "undo"].map((n) => <Icon key={n} name={n} size={15} />)}
            <QuickCaret />
            <Icon name="redo" size={15} />
            <QuickCaret />
            {["sum", "calcview", "findview", "glasses", "brush", "gridblue", "addpage"].map((n) => <Icon key={n} name={n} size={15} />)}
            <QuickCaret $end />
          </Quick>
          <Title>广联达BIM土建计量平台 GTJ2018（学习版模式）  - [C:\Users\Administrator\Desktop\上栗县应急救援指挥中心--修改.GTJ]</Title>
        </TitleRow>
        <MenuRow>
          {MENU.map((m) => <MenuTab key={m} $active={m === "建模"}>{m}</MenuTab>)}
          <HelpBox aria-label="search" defaultValue="如何布置拱过梁" />
        </MenuRow>
      </TopMain>
    </Top>
  );
}

function RibbonBar() {
  return (
    <Ribbon>
      <Group $left={0} $right={13}>
        <GroupBody $gap={6}>
          <BigTool $w={38}>
            <Svg width="30" height="30" viewBox="0 0 30 30">
              <path d="M1 1h28v28H1z" fill="#a9adb5" /><path d="M1 1h28v8H1z" fill="#3a3f48" />
              <path d="M8 28V13h20" fill="none" stroke="#333" strokeDasharray="2 2" />
              <path d="M20 15l9 9-4 1-5 3z" fill="#1e90ff" />
            </Svg>
            选择
          </BigTool>
          <Column>
            <T icon="dropper">拾取构件</T>
            <T icon="batch">批量选择</T>
            <T icon="props">按属性选择</T>
          </Column>
        </GroupBody>
        <Caption>选择<Caret /></Caption>
      </Group>
      <Group $left={9} $right={12}>
        <GroupBody $gap={13}>
          <Column>
            <T icon="replace" off>查找替换</T>
            <T icon="ratio" off>设置比例</T>
            <T icon="restore" off>还原CAD</T>
          </Column>
          <Column>
            <T icon="floors" off>识别楼层表</T>
            <T icon="cadopt">CAD识别选项</T>
          </Column>
        </GroupBody>
        <Caption>CAD操作<Caret /></Caption>
      </Group>
      <Group $left={9} $right={7}>
        <GroupBody $gap={9}>
          <Column>
            <T icon="define">定义</T>
            <T icon="cloud">云检查</T>
            <T icon="lock" caret>锁定</T>
          </Column>
          <Column>
            <T icon="copylayer" caret>复制到其它层</T>
            <T icon="align1" caret off>自动平齐板</T>
            <T icon="axes" caret>两点辅轴</T>
          </Column>
          <Column>
            <T icon="length" caret>长度标注</T>
            <T icon="store" caret>图元存盘</T>
            <T icon="filter" off>图元过滤</T>
          </Column>
        </GroupBody>
        <Caption>通用操作<Caret /></Caption>
      </Group>
      <Group $left={9} $right={8}>
        <GroupBody $gap={11}>
          <Column><T icon="copyball">复制</T><T icon="move">移动</T><T icon="mirror">镜像</T></Column>
          <Column><T icon="extend">延伸</T><T icon="trim">修剪</T><T icon="offset">偏移</T></Column>
          <Column><T icon="break">打断</T><T icon="merge">合并</T><T icon="split">分割</T></Column>
          <Column><T icon="alignr" caret>对齐</T><T icon="erase">删除</T><T icon="rotate">旋转</T></Column>
        </GroupBody>
        <Caption>修改<Caret /></Caption>
      </Group>
      <Group $left={6} $right={10}>
        <GroupBody $gap={3}>
          <BigTool $w={40} disabled>
            <Svg width="30" height="30" viewBox="0 0 30 30">
              <path d="M15 0v30M0 15h30" stroke="#ccc" /><circle cx="15" cy="15" r="4" fill="#a8a8a8" />
            </Svg>
            点
          </BigTool>
          <BigTool $w={40} $on>
            <Svg width="30" height="30" viewBox="0 0 30 30">
              <path d="M3 27L27 2" stroke="#ddd" />
              <path d="M1.500 25.500h3v3h-3zM25.500.5h3v3h-3z" stroke="#1e90ff" fill="none" />
            </Svg>
            直线
          </BigTool>
          <Column>
            {["arc", "circ", "rect"].map((n) => (
              <Tool key={n} aria-label={n}><Icon name={n} /></Tool>
            ))}
          </Column>
        </GroupBody>
        <Caption>绘图<Caret /></Caption>
      </Group>
      <Group $left={2} $right={13}>
        <GroupBody $gap={2}>
          <BigTool $w={58}>
            <Svg width="30" height="30" viewBox="0 0 30 30">
              <path d="M2 7h26M2 14h26M2 22h26M9 2v27M16 2v27M23 0v24" stroke="#c9ccd2" />
              <path d="M1 5h3v3H1zM1 12h3v3H1zM1 20h3v3H1zM8 27h3v3H8zM15 27h3v3h-3z" fill="#fff" />
              <path d="M11 13l14 16" stroke="#1e90ff" strokeWidth="4" />
              <path d="M19 12v6M16 15h6M8 20v6M5 23h6" stroke="#1e90ff" />
            </Svg>
            智能布置
            <Caret />
          </BigTool>
          <Column><T icon="elev">查改标高</T></Column>
        </GroupBody>
        <Caption $shift={14}>挑檐二次编辑</Caption>
      </Group>
    </Ribbon>
  );
}

function OptionBar() {
  return (
    <Options>
      <Picker label="工程" value="上栗县应急救援" w={94} flush />
      <Picker label="楼层" value="首层" w={100} />
      <Picker label="类别" value="其它" w={100} />
      <Picker label="构件类型" value="挑檐" w={100} />
      <Picker label="构件" value="一层大样12a-雨棚" w={100} />
      <Picker label="分层" value="分层1" w={100} />
      <CheckLabel><Check type="checkbox" />点加长度</CheckLabel>
      <Field $w={78}>长度:<input defaultValue="0" /></Field>
      <Field $w={78}>反向长度:<input defaultValue="0" /></Field>
      <Field $w={78} $on>左偏心距离:<input defaultValue="620" /></Field>
      <Picker label="偏移" value="不偏移" w={55} />
      <Pair label="X=" />
      <Pair label="Y=" />
    </Options>
  );
}

function Sidebar() {
  return (
    <Side>
      <SideBar>
        <PlainButton aria-label="add">
          <Svg width="11" height="14"><path d="M7 1v7M4 4.500h7M2 6v7M0 9.500h5" stroke="#4a9cf5" strokeWidth="2" /></Svg>
        </PlainButton>
        <SideToggle aria-label="list">
          <Svg width="14" height="14"><path d="M1.500.5h2v2h-2zM1.500 5.500h2v2h-2zM1.500 10.500h2v2h-2zM6 1.500h8M6 6.500h8M6 11.500h8" stroke="#4aa0ff" fill="none" /></Svg>
        </SideToggle>
        <SideToggle aria-label="cards">
          <Svg width="16" height="14"><path d="M.5.5h15v12H.5zM.5 5.500h15M3 8.500h9M3 3h7M12 3h2" stroke="#4aa0ff" fill="none" /></Svg>
        </SideToggle>
      </SideBar>
      <SideBody>
        <SideList>
          {SIDE.map(([name, items]) => (
            <li key={name}>
              <SideGroup><Icon name={items ? "opened" : "closed"} size={15} />{name}</SideGroup>
              {items && items.map(([icon, text]) => (
                <SideItem key={text} $on={icon === "eave"}><Icon name={icon} />{text}</SideItem>
              ))}
            </li>
          ))}
        </SideList>
        <SideTrack />
      </SideBody>
    </Side>
  );
}

const Close = () => (
  <PlainButton aria-label="close">
    <Svg width="7" height="7"><path d="M1 1l5 5M6 1L1 6" stroke="#d0d0d0" strokeWidth="1.400" /></Svg>
  </PlainButton>
);
const More = () => (
  <PlainButton aria-label="more">
    <Svg width="8" height="6"><path d="M0 0l4 3-4 3zM4 0l4 3-4 3z" fill="#d0d0d0" /></Svg>
  </PlainButton>
);

function Docks() {
  return (
    <Dock>
      <Panel $h={331}>
        <Strip><Close /></Strip>
        <PanelTabs><PanelTab $on>构件列表</PanelTab><PanelTab>图纸管理</PanelTab></PanelTabs>
        <PanelTools>
          <PanelTool><Icon name="newdoc" size={15} />新建<Caret /></PanelTool>
          <PanelTool><Icon name="deldoc" size={15} />删除</PanelTool>
          <PanelTool><Icon name="copydoc" size={15} />复制</PanelTool>
          <PanelTool><Icon name="layers" size={13} />层间复制</PanelTool>
          <More />
        </PanelTools>
        <SearchRow>
          <input placeholder="搜索构件..." aria-label="搜索构件" />
          <Svg width="12" height="12"><circle cx="5" cy="5" r="3.500" fill="none" stroke="#ccc" strokeWidth="1.300" /><path d="M8 8l3 3" stroke="#ccc" strokeWidth="1.500" /></Svg>
        </SearchRow>
        <Tree $root>
          <li>
            <TreeItem>
              <Svg width="10" height="10"><path d="M7 2v6H1z" fill="#2a2a2a" /></Svg>
              挑檐
            </TreeItem>
            <Tree>
              {PARTS.map((p, i) => <li key={p}><TreeItem $on={i === 3}>{p}</TreeItem></li>)}
            </Tree>
          </li>
        </Tree>
      </Panel>
      <Panel $flex="1">
        <Strip><Close /></Strip>
        <PanelTitle>属性列表</PanelTitle>
        <Grid>
          <colgroup><col width="22" /><col width="152" /><col /></colgroup>
          <thead><tr><NumCell /><th>属性名称</th><ValueHead>属性值</ValueHead></tr></thead>
          <tbody>
            {PROPS.map(([n, name, value, blue, dim, expand]) => (
              <tr key={n}>
                <NumCell>{n}</NumCell>
                <NameCell $blue={blue}>
                  {expand && (
                    <Expand aria-label="expand">
                      <Svg width="8" height="8"><path d="M0 4h8M4 0v8" stroke="#fff" /></Svg>
                    </Expand>
                  )}
                  {name}
                </NameCell>
                <ValueCell $dim={dim}>{value}</ValueCell>
              </tr>
            ))}
          </tbody>
        </Grid>
        <TableFill />
        <ScrollRow $thumb={227}><span /></ScrollRow>
      </Panel>
      <BottomTab>截面编辑</BottomTab>
    </Dock>
  );
}

function Layers() {
  return (
    <LayerDock>
      <LayerPanel>
        <Strip><Close /></Strip>
        <PanelTitle>图层管理</PanelTitle>
        <PanelTools><PanelTool>显示指定图层</PanelTool><More /></PanelTools>
        <Grid>
          <colgroup><col width="51" /><col width="36" /><col /></colgroup>
          <thead><tr><th>开 / 关</th><th>颜色</th><th /></tr></thead>
          <tbody>
            {["已提取的 CAD 图层", "CAD 原始图层"].map((t) => (
              <tr key={t}>
                <LayerCell><Check type="checkbox" aria-label={t} $bg="#636363" $line="#3c3c3c" /></LayerCell>
                <LayerCell><Svg width="6" height="9"><path d="M1 1l4 3.500L1 8z" fill="none" stroke="#888" /></Svg></LayerCell>
                <td>{t}</td>
              </tr>
            ))}
          </tbody>
        </Grid>
        <LayerFill />
        <ScrollRow $thumb={26} $low><span /></ScrollRow>
      </LayerPanel>
      <Splitter><SplitHandle aria-label="collapse" /></Splitter>
    </LayerDock>
  );
}

function SectionDialog() {
  return (
    <Dialog role="dialog" aria-label="截面编辑">
      <DialogHead>
        <DialogTitle>截面编辑</DialogTitle>
        <PlainButton aria-label="close">
          <Svg width="10" height="9"><path d="M1 1l8 7M9 1L1 8" stroke="#fff" strokeWidth="1.600" /></Svg>
        </PlainButton>
      </DialogHead>
      <DialogBar>
        <DialogOn>选择</DialogOn>
        <Sep $right={4} />
        <RadioLabel><input type="radio" name="bar" defaultChecked />纵筋</RadioLabel>
        <RadioLabel $last><input type="radio" name="bar" />横筋</RadioLabel>
        <Sep $right={9} />
        <DialogTool>直线<Caret $color="#aaa" /></DialogTool>
        <DialogTool>显示标注</DialogTool>
        <DialogTool>手动设置参考线<Caret $color="#aaa" /></DialogTool>
        <DialogTool>设置标高</DialogTool>
        <DialogTool disabled>删除</DialogTool>
        <DialogTool>清空钢筋</DialogTool>
      </DialogBar>
      <DialogBar>
        <RadioLabel><input type="radio" name="dir" defaultChecked />水平</RadioLabel>
        <RadioLabel $last><input type="radio" name="dir" />垂直</RadioLabel>
        <Sep $right={9} />
        <DialogTool>对齐钢筋</DialogTool>
      </DialogBar>
      <DialogCanvas>
        <Section />
        <InfoBox>
          <label htmlFor="rebar">钢筋信息:</label>
          <Combo>
            <input id="rebar" defaultValue="3C16" />
            <button aria-label="open"><Caret $color="#555" /></button>
          </Combo>
        </InfoBox>
      </DialogCanvas>
      <Status>
        <Snap aria-label="off" />
        <Snap $on aria-label="nearest"><Svg width="23" height="23"><path d="M3 19L18 4" stroke={B} /><path d="M9.500 9.500h3v3h-3z" fill="none" stroke={O} strokeWidth="1.500" /></Svg></Snap>
        <Snap $on aria-label="perpendicular"><Svg width="23" height="23"><path d="M4 16h15M11.500 5v11" stroke={B} /><path d="M10 14.500h3v3h-3z" fill="#fff" stroke={O} strokeWidth="1.500" /></Svg></Snap>
        <Snap aria-label="input"><Svg width="23" height="23"><path d="M7 5v7M3.500 8.500h7" stroke={B} /><path d="M9 13h11v5H9z" fill={B} /></Svg></Snap>
        <StatusText>(X: 78 Y: 95)  选择钢筋进行编辑，选择标注进行修改或移动;</StatusText>
        <Grip width="8" height="8"><path d="M6 0h2v2H6zM3 3h2v2H3zM6 3h2v2H6zM0 6h2v2H0zM3 6h2v2H3zM6 6h2v2H6z" fill="#6c7380" /></Grip>
      </Status>
    </Dialog>
  );
}

export default function App() {
  return (
    <Shell>
      <Global />
      <TopBar />
      <RibbonBar />
      <OptionBar />
      <Workspace>
        <Sidebar />
        <Docks />
        <Layers />
        <Stage>
          <Plan />
          <SectionDialog />
        </Stage>
      </Workspace>
      <Overlay aria-hidden="true">
        <g fill="#fb3634">
          <path d="M317 347L333 356L331 359L434 513L323 363L320 365Z" />
          <path d="M100 878L117 875L116 880L203 911L112 885L110 890Z" />
          <path d="M562 817L570 810V821Z" />
        </g>
      </Overlay>
    </Shell>
  );
}
